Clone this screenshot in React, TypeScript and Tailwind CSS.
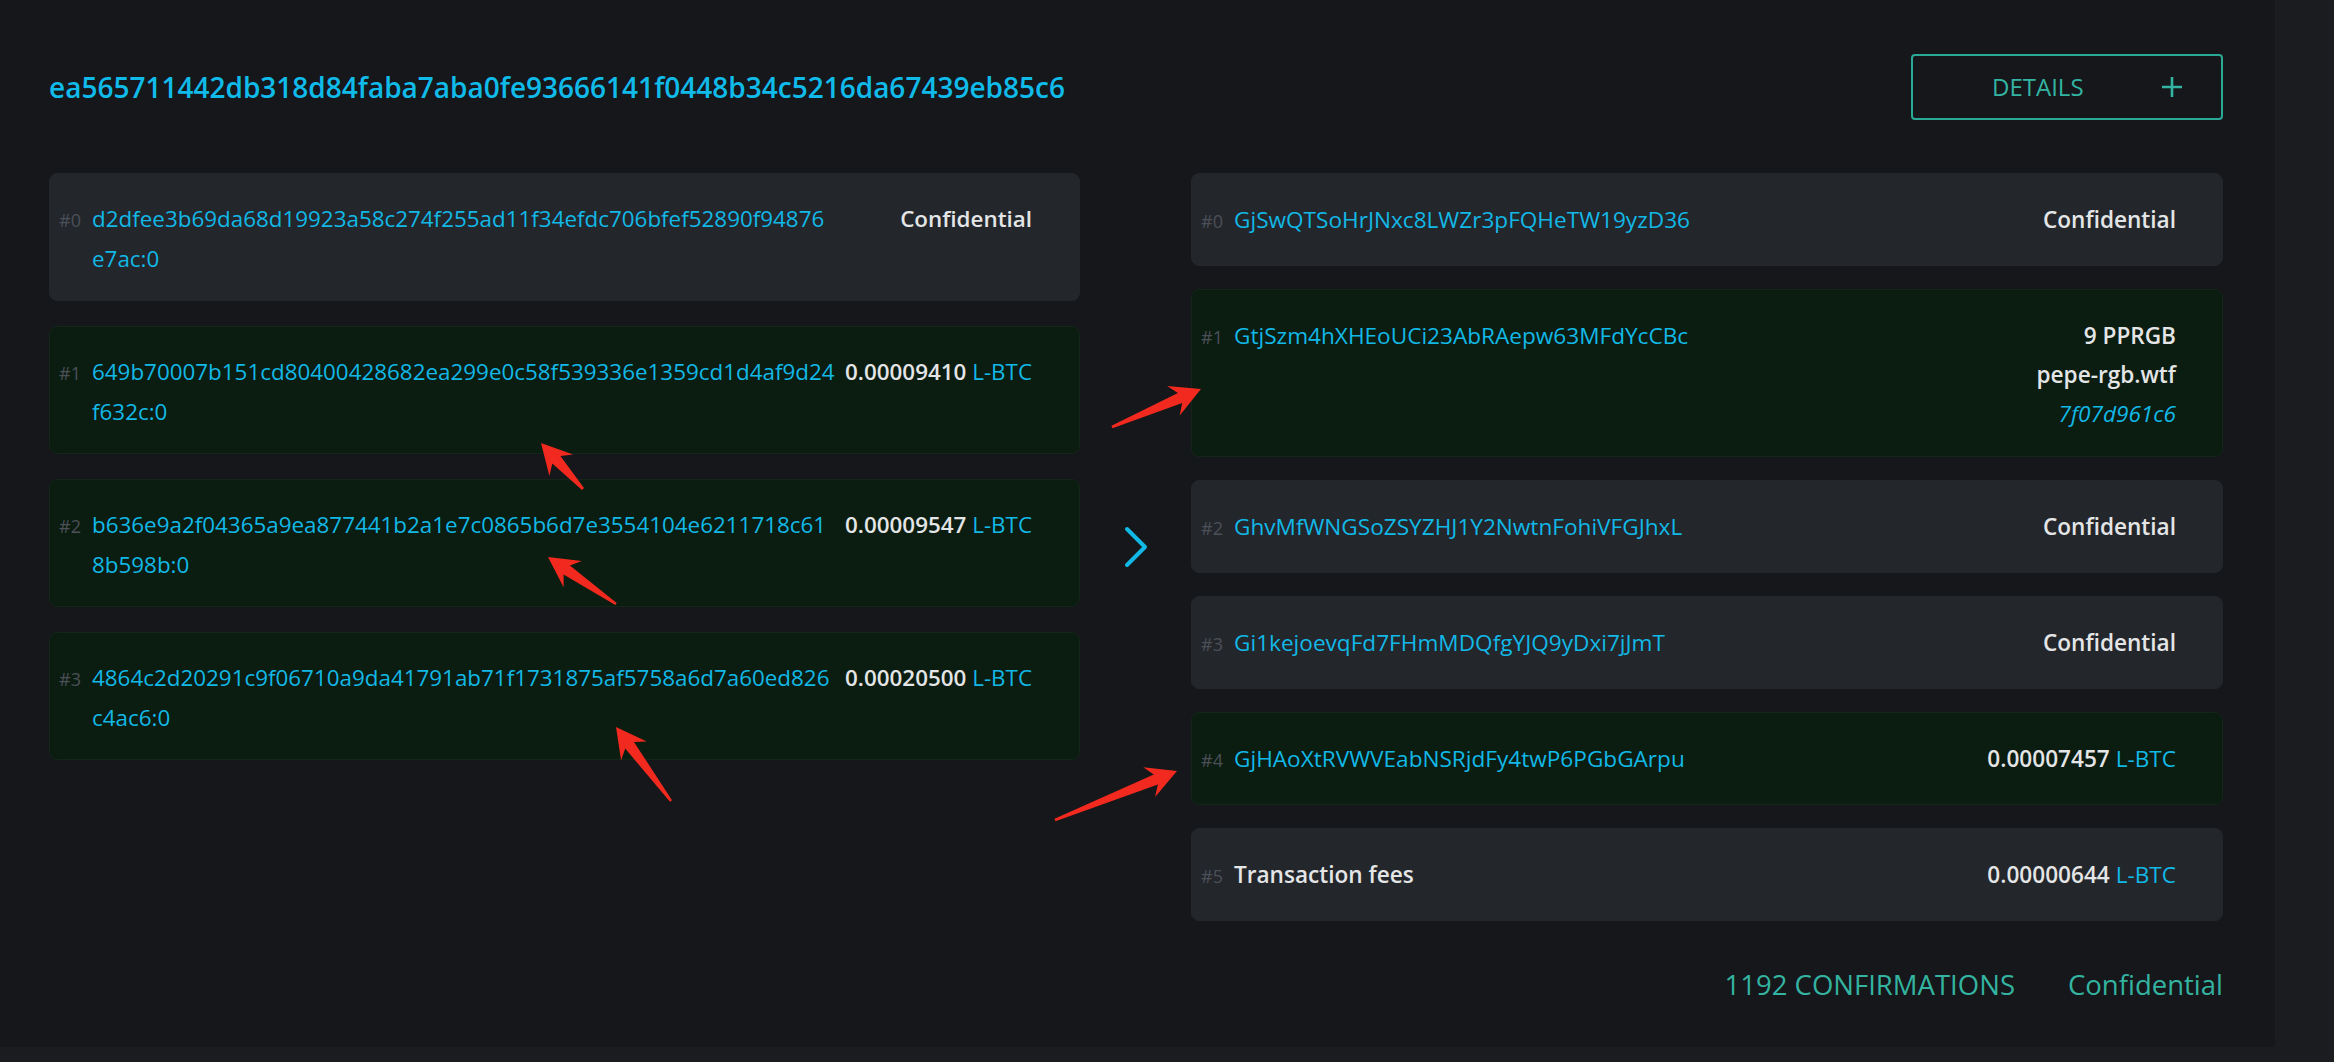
import React from "react";

const CYAN = "text-[#12b8e6]";

type Arrow = [number, number, number, number];
const arrows: Arrow[] = [
  [583, 489, 541, 443],
  [616, 604, 548, 557],
  [671, 801, 616, 727],
  [1112, 427, 1201, 389],
  [1055, 820, 1177, 771],
];

function arrowPoints([tx, ty, px, py]: Arrow): string {
  const dx = px - tx;
  const dy = py - ty;
  const L = Math.hypot(dx, dy);
  const ux = dx / L;
  const uy = dy / L;
  const nx = -uy;
  const ny = ux;
  const h = 30;
  const w = 16;
  const s = 5.5;
  const back = h * 0.76;
  const pts: [number, number][] = [
    [px, py],
    [px - ux * h + nx * w, py - uy * h + ny * w],
    [px - ux * back + nx * s, py - uy * back + ny * s],
    [tx + nx * 1.3, ty + ny * 1.3],
    [tx - nx * 1.3, ty - ny * 1.3],
    [px - ux * back - nx * s, py - uy * back - ny * s],
    [px - ux * h - nx * w, py - uy * h - ny * w],
  ];
  return pts.map((p) => `${p[0].toFixed(1)},${p[1].toFixed(1)}`).join(" ");
}

function Label({ n }: { n: number }) {
  return (
    <span className="w-[33px] shrink-0 text-[18px] text-[#4b5058]">#{n}</span>
  );
}

function Amount({ value }: { value: string }) {
  return (
    <span className="shrink-0 ml-auto text-right whitespace-nowrap">
      <span className="font-semibold text-[#e4e5e6]">{value}</span>{" "}
      <span className={CYAN}>L-BTC</span>
    </span>
  );
}

function Confidential() {
  return (
    <span className="shrink-0 ml-auto font-semibold text-[#e4e5e6]">
      Confidential
    </span>
  );
}

type InRow = { n: number; l1: string; l2: string; green: boolean; amount?: string };

const inputs: InRow[] = [
  { n: 0, l1: "d2dfee3b69da68d19923a58c274f255ad11f34efdc706bfef52890f94876", l2: "e7ac:0", green: false },
  { n: 1, l1: "649b70007b151cd80400428682ea299e0c58f539336e1359cd1d4af9d24", l2: "f632c:0", green: true, amount: "0.00009410" },
  { n: 2, l1: "b636e9a2f04365a9ea877441b2a1e7c0865b6d7e3554104e6211718c61", l2: "8b598b:0", green: true, amount: "0.00009547" },
  { n: 3, l1: "4864c2d20291c9f06710a9da41791ab71f1731875af5758a6d7a60ed826", l2: "c4ac6:0", green: true, amount: "0.00020500" },
];

function cardClass(green: boolean) {
  return green
    ? "bg-[#0b1c10] border border-[#14251a]"
    : "bg-[#23262b] border border-[#23262b]";
}

const single =
  "flex items-baseline pl-[9px] pr-[46px] pt-[26px] pb-[24px] leading-[40px]";

export default function App() {
  return (
    <div className="min-h-screen w-full bg-[#1a1c1f] font-['Open_Sans','Noto_Sans',sans-serif]">
      <div className="relative w-[2275px] h-[1047px] bg-[#15171a] pl-[49px] pr-[52px] pt-[54px]">
        {/* header */}
        <div className="flex items-center justify-between h-[66px]">
          <h1 className="text-[28px] leading-none font-semibold text-[#10bbea]">
            ea565711442db318d84faba7aba0fe93666141f0448b34c5216da67439eb85c6
          </h1>
          <button className="w-[312px] h-[66px] border-2 border-[#2aa996] rounded-[4px] flex items-center justify-between pl-[79px] pr-[38px] text-[24px] text-[#33b3a2] bg-transparent">
            <span>DETAILS</span>
            <svg width="22" height="22" viewBox="0 0 22 22">
              <path d="M11 1 V21 M1 11 H21" stroke="#33b3a2" strokeWidth="2.6" />
            </svg>
          </button>
        </div>

        {/* ins / outs */}
        <div className="mt-[53px] flex items-center">
          <div className="w-[1031px] self-start flex flex-col gap-[25px] text-[22.4px]">
            {inputs.map((r) => (
              <div
                key={r.n}
                className={`rounded-[8px] ${cardClass(r.green)} flex items-baseline pl-[9px] pr-[47px] pt-[25px] pb-[21px] leading-[40px]`}
              >
                <Label n={r.n} />
                <div className={`${CYAN} flex-1`}>
                  <div>{r.l1}</div>
                  <div>{r.l2}</div>
                </div>
                {r.amount ? <Amount value={r.amount} /> : <Confidential />}
              </div>
            ))}
          </div>

          <div className="flex-1 flex justify-center">
            <svg width="26" height="42" viewBox="0 0 26 42">
              <path
                d="M4 3 L22 21 L4 39"
                fill="none"
                stroke="#12b8e6"
                strokeWidth="4"
                strokeLinecap="round"
                strokeLinejoin="round"
              />
            </svg>
          </div>

          <div className="w-[1032px] flex flex-col gap-[23px] text-[22.6px]">
            <div className={`rounded-[8px] ${cardClass(false)} ${single}`}>
              <Label n={0} />
              <span className={CYAN}>GjSwQTSoHrJNxc8LWZr3pFQHeTW19yzD36</span>
              <Confidential />
            </div>

            <div className={`rounded-[8px] ${cardClass(true)} flex items-baseline pl-[9px] pr-[46px] pt-[26px] pb-[23px] leading-[39px]`}>
              <Label n={1} />
              <span className={CYAN}>GtjSzm4hXHEoUCi23AbRAepw63MFdYcCBc</span>
              <div className="ml-auto flex flex-col items-end">
                <span className="font-semibold text-[#e4e5e6]">9 PPRGB</span>
                <span className="font-semibold text-[#e4e5e6]">pepe-rgb.wtf</span>
                <span className={`${CYAN} italic`}>7f07d961c6</span>
              </div>
            </div>

            <div className={`rounded-[8px] ${cardClass(false)} ${single}`}>
              <Label n={2} />
              <span className={CYAN}>GhvMfWNGSoZSYZHJ1Y2NwtnFohiVFGJhxL</span>
              <Confidential />
            </div>

            <div className={`rounded-[8px] ${cardClass(false)} ${single}`}>
              <Label n={3} />
              <span className={CYAN}>Gi1kejoevqFd7FHmMDQfgYJQ9yDxi7jJmT</span>
              <Confidential />
            </div>

            <div className={`rounded-[8px] ${cardClass(true)} ${single}`}>
              <Label n={4} />
              <span className={CYAN}>GjHAoXtRVWVEabNSRjdFy4twP6PGbGArpu</span>
              <Amount value="0.00007457" />
            </div>

            <div className={`rounded-[8px] ${cardClass(false)} ${single}`}>
              <Label n={5} />
              <span className="font-semibold text-[#e4e5e6]">Transaction fees</span>
              <Amount value="0.00000644" />
            </div>
          </div>
        </div>

        {/* footer */}
        <div className="mt-[44px] flex justify-end gap-[53px] text-[27.5px] leading-[40px] text-[#33b3a0]">
          <span>1192 CONFIRMATIONS</span>
          <span>Confidential</span>
        </div>

        {/* annotation arrows */}
        <svg
          className="absolute left-0 top-0 pointer-events-none"
          width="2275"
          height="1047"
          viewBox="0 0 2275 1047"
        >
          {arrows.map((a, i) => (
            <polygon key={i} points={arrowPoints(a)} fill="#f2291e" />
          ))}
        </svg>
      </div>
    </div>
  );
}
